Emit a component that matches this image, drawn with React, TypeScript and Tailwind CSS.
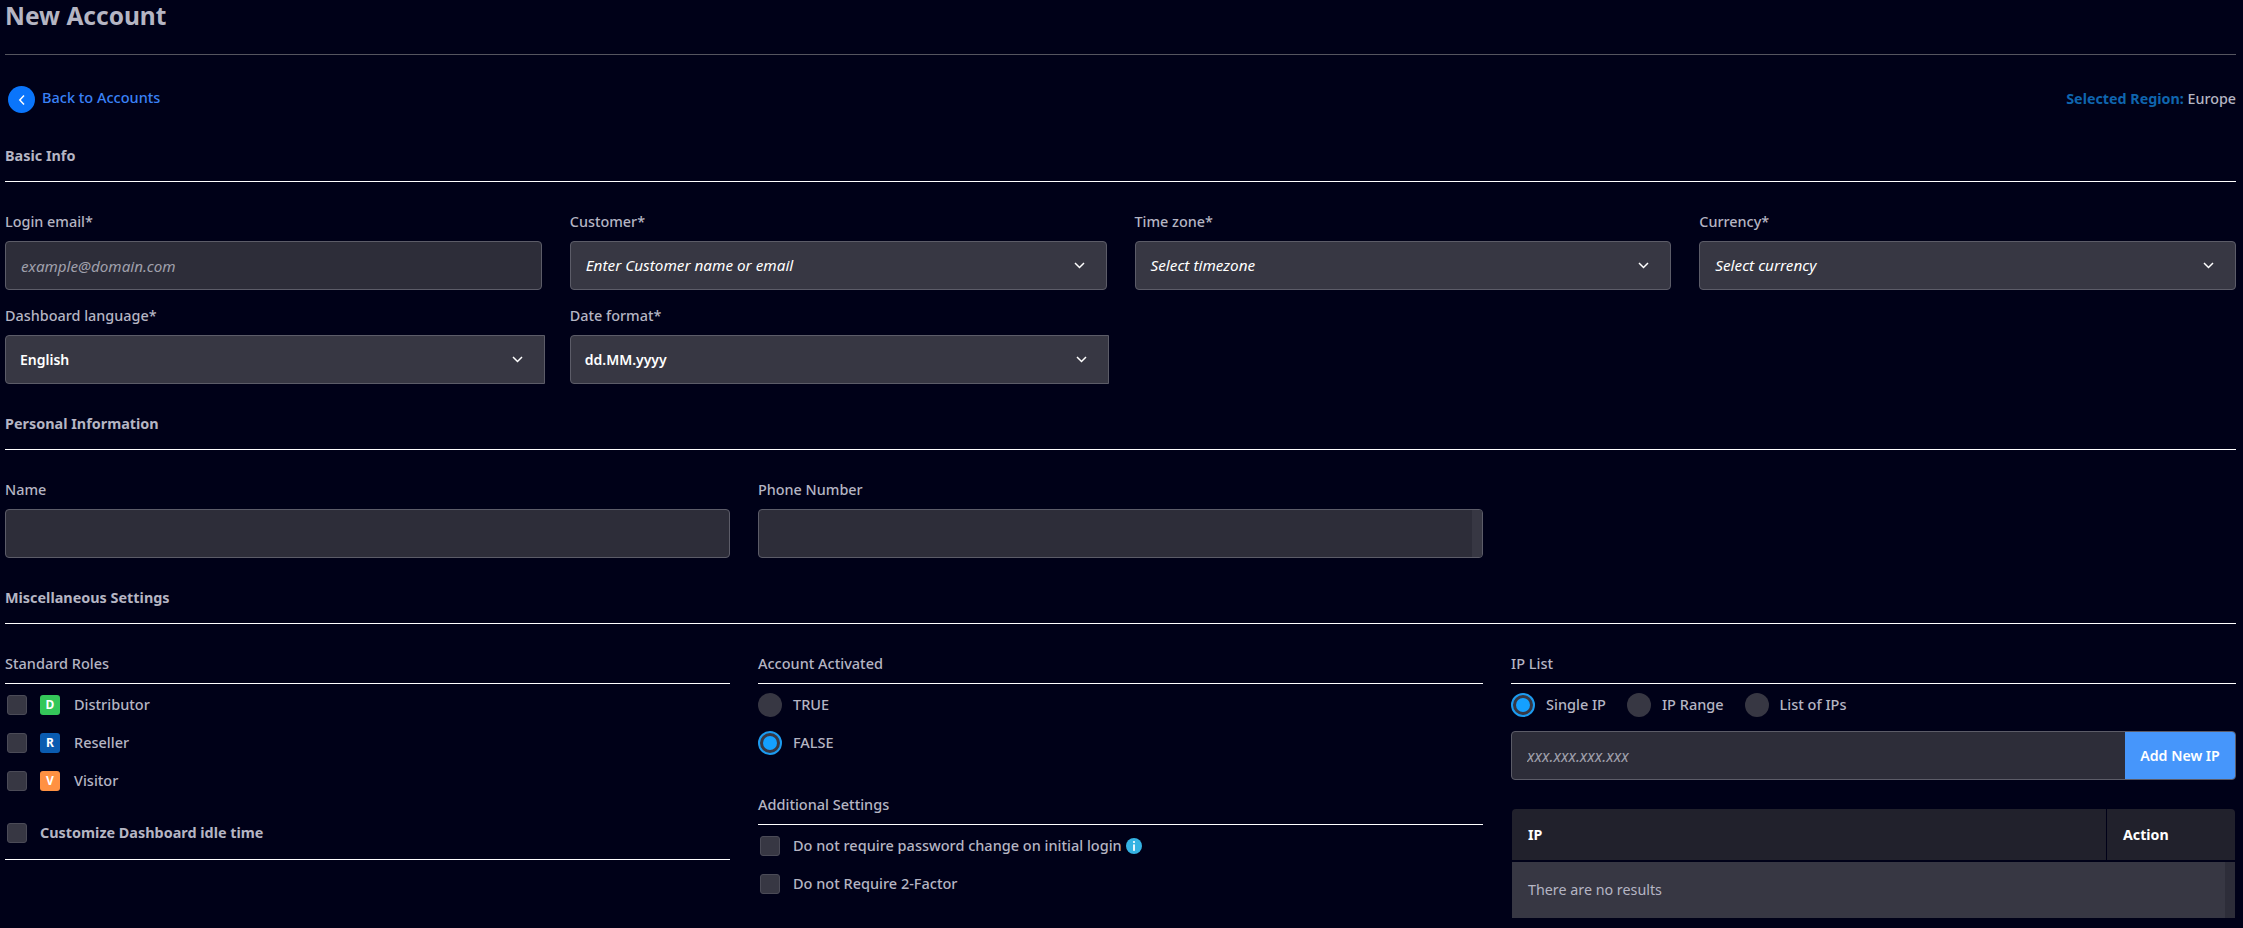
const labelCls = "h-5 text-[14.4px] leading-[19px] font-medium text-[#b5b5c3]";

const Chevron = () => (
  <svg width="11" height="7" viewBox="0 0 11 7" fill="none" className="shrink-0">
    <path d="M1 1l4.5 4.5L10 1" stroke="#ffffff" strokeWidth="1.5" />
  </svg>
);

const SectionTitle = ({ children, className = "mt-[30px]" }: { children: string; className?: string }) => (
  <div className={`h-[36px] border-b border-white text-[14.4px] leading-5 font-bold text-[#b5b5c3] ${className}`}>
    {children}
  </div>
);

const SubTitle = ({ children, className = "" }: { children: string; className?: string }) => (
  <div className={`h-[30px] border-b border-white text-[14.5px] leading-[18px] font-medium text-[#b5b5c3] ${className}`}>
    {children}
  </div>
);

const TextField = ({ label, placeholder, strip }: { label: string; placeholder?: string; strip?: boolean }) => (
  <div>
    <div className={labelCls}>{label}</div>
    <div className="relative mt-[9px] h-[49px] overflow-hidden rounded border border-[#5c5c68] bg-[#2d2d39]">
      <input
        placeholder={placeholder}
        className="h-full w-full bg-transparent px-[15px] text-[15.2px] text-white outline-none placeholder:text-[#a0a0ac] placeholder:italic"
      />
      {strip && <div className="absolute inset-y-0 right-0 w-[10px] bg-[#373743]" />}
    </div>
  </div>
);

const SelectField = ({
  label,
  value,
  italic,
  squareRight,
  className = "",
}: {
  label: string;
  value: string;
  italic?: boolean;
  squareRight?: boolean;
  className?: string;
}) => (
  <div className={className}>
    <div className={labelCls}>{label}</div>
    <div
      className={`mt-[9px] flex h-[49px] items-center justify-between border border-[#5c5c68] bg-[#373743] pr-[21px] text-white ${
        squareRight ? "rounded-l" : "rounded"
      } ${italic ? "pl-[15px] text-[15.3px] italic" : "pl-[14px] text-sm font-semibold"}`}
    >
      <span>{value}</span>
      <Chevron />
    </div>
  </div>
);

const Checkbox = () => <div className="h-5 w-5 shrink-0 rounded-[3px] border border-[#4b4b57] bg-[#373743]" />;

const Radio = ({ on }: { on?: boolean }) =>
  on ? (
    <div className="flex h-6 w-6 shrink-0 items-center justify-center rounded-full border-2 border-[#1c9bf0] bg-[#373743]">
      <div className="h-[14px] w-[14px] rounded-full bg-[#14a0ff]" />
    </div>
  ) : (
    <div className="h-6 w-6 shrink-0 rounded-full bg-[#373743]" />
  );

const roles = [
  { name: "Distributor", letter: "D", color: "bg-[#34c759]" },
  { name: "Reseller", letter: "R", color: "bg-[#0a5bb0]" },
  { name: "Visitor", letter: "V", color: "bg-[#ff9142]" },
];

const rowText = "mb-[2px] text-[14.5px] leading-5 font-medium text-[#b5b5c3]";

export default function App() {
  return (
    <div className="h-[928px] overflow-hidden bg-[#000118] pl-[5px] pr-[7px] font-['Noto_Sans',sans-serif]">
      <div className="h-[55px] border-b border-[#55555f] text-[24.5px] leading-8 font-bold text-[#b5b5c3]">New Account</div>

      <div className="mt-[31px] flex h-[27px] items-center justify-between">
        <div className="flex items-center">
          <div className="ml-[3px] flex h-[27px] w-[27px] items-center justify-center rounded-full bg-[#0a75fb]">
            <svg width="8" height="12" viewBox="0 0 8 12" fill="none">
              <path d="M6 1.5 1.8 6 6 10.5" stroke="#ffffff" strokeWidth="1.5" />
            </svg>
          </div>
          <span className="ml-[7px] -mt-[3px] text-[14.5px] font-medium text-[#3a82f7]">Back to Accounts</span>
        </div>
        <div className="-mt-[2px] text-[14.3px] font-medium text-[#b5b5c3]">
          <span className="font-bold text-[#0f65ae]">Selected Region:</span> Europe
        </div>
      </div>

      <SectionTitle className="mt-[33px]">Basic Info</SectionTitle>

      <div className="mt-[30px] grid grid-cols-4 gap-x-7">
        <TextField label="Login email*" placeholder="example@domain.com" />
        <SelectField label="Customer*" value="Enter Customer name or email" italic />
        <SelectField label="Time zone*" value="Select timezone" italic />
        <SelectField label="Currency*" value="Select currency" italic />
      </div>
      <div className="mt-4 grid grid-cols-4 gap-x-7">
        <SelectField label="Dashboard language*" value="English" squareRight className="mr-[-3px]" />
        <SelectField label="Date format*" value="dd.MM.yyyy" squareRight className="mr-[-2px]" />
      </div>

      <SectionTitle>Personal Information</SectionTitle>

      <div className="mt-[30px] grid grid-cols-3 gap-x-7">
        <TextField label="Name" />
        <TextField label="Phone Number" strip />
      </div>

      <SectionTitle>Miscellaneous Settings</SectionTitle>

      <div className="mt-[30px] grid grid-cols-3 gap-x-7">
        <div>
          <SubTitle>Standard Roles</SubTitle>
          <div className="mt-[9px] flex flex-col gap-[14px]">
            {roles.map((role) => (
              <div key={role.name} className="flex h-6 items-center pl-[2px]">
                <Checkbox />
                <div
                  className={`ml-[13px] flex h-5 w-5 items-center justify-center rounded-[3px] text-xs font-bold text-white ${role.color}`}
                >
                  {role.letter}
                </div>
                <span className={`ml-[14px] ${rowText}`}>{role.name}</span>
              </div>
            ))}
          </div>
          <div className="mt-7 border-b border-white pb-[14px]">
            <div className="flex h-6 items-center pl-[2px]">
              <Checkbox />
              <span className="ml-[13px] text-[14.4px] leading-5 font-bold text-[#b5b5c3]">Customize Dashboard idle time</span>
            </div>
          </div>
        </div>

        <div>
          <SubTitle>Account Activated</SubTitle>
          <div className="mt-[9px] flex flex-col gap-[14px]">
            <div className="flex h-6 items-center">
              <Radio />
              <span className={`ml-[11px] ${rowText}`}>TRUE</span>
            </div>
            <div className="flex h-6 items-center">
              <Radio on />
              <span className={`ml-[11px] ${rowText}`}>FALSE</span>
            </div>
          </div>
          <SubTitle className="mt-10">Additional Settings</SubTitle>
          <div className="mt-[9px] flex flex-col gap-[14px]">
            <div className="flex h-6 items-center pl-[2px]">
              <Checkbox />
              <span className={`ml-[13px] ${rowText}`}>Do not require password change on initial login</span>
              <svg width="16" height="16" viewBox="0 0 16 16" className="ml-[4px]">
                <circle cx="8" cy="8" r="8" fill="#35b3e3" />
                <circle cx="8" cy="4" r="1.1" fill="#ffffff" />
                <rect x="7.1" y="6.4" width="1.8" height="6.4" fill="#ffffff" />
              </svg>
            </div>
            <div className="flex h-6 items-center pl-[2px]">
              <Checkbox />
              <span className={`ml-[13px] ${rowText}`}>Do not Require 2-Factor</span>
            </div>
          </div>
        </div>

        <div>
          <SubTitle>IP List</SubTitle>
          <div className="mt-[9px] flex h-6 items-center">
            <Radio on />
            <span className={`ml-[11px] ${rowText}`}>Single IP</span>
            <div className="ml-[21px]">
              <Radio />
            </div>
            <span className={`ml-[11px] ${rowText}`}>IP Range</span>
            <div className="ml-[21px]">
              <Radio />
            </div>
            <span className={`ml-[11px] ${rowText}`}>List of IPs</span>
          </div>
          <div className="mt-[14px] flex h-[49px] overflow-hidden rounded border border-[#5c5c68] bg-[#2d2d39]">
            <input
              placeholder="xxx.xxx.xxx.xxx"
              className="h-full min-w-0 flex-1 bg-transparent px-[15px] text-[15.5px] text-white outline-none placeholder:text-[#a0a0ac] placeholder:italic"
            />
            <button className="w-[110px] bg-[#4696fb] text-[14.2px] font-semibold text-white">Add New IP</button>
          </div>
          <div className="ml-px mr-px mt-[29px] overflow-hidden rounded-t">
            <div className="flex h-[53px] items-center border-b-2 border-[#000118] bg-[#21212c] text-[14.2px] font-bold text-white">
              <div className="flex h-full flex-1 items-center border-r border-[#000118] pl-4">IP</div>
              <div className="w-[128px] pl-4">Action</div>
            </div>
            <div className="relative flex h-[56px] items-center bg-[#373743] pl-4 text-[14.3px] text-[#b5b5c3]">
              There are no results
              <div className="absolute inset-y-0 right-0 w-[10px] bg-[#2d2d39]" />
            </div>
          </div>
        </div>
      </div>
    </div>
  );
}
